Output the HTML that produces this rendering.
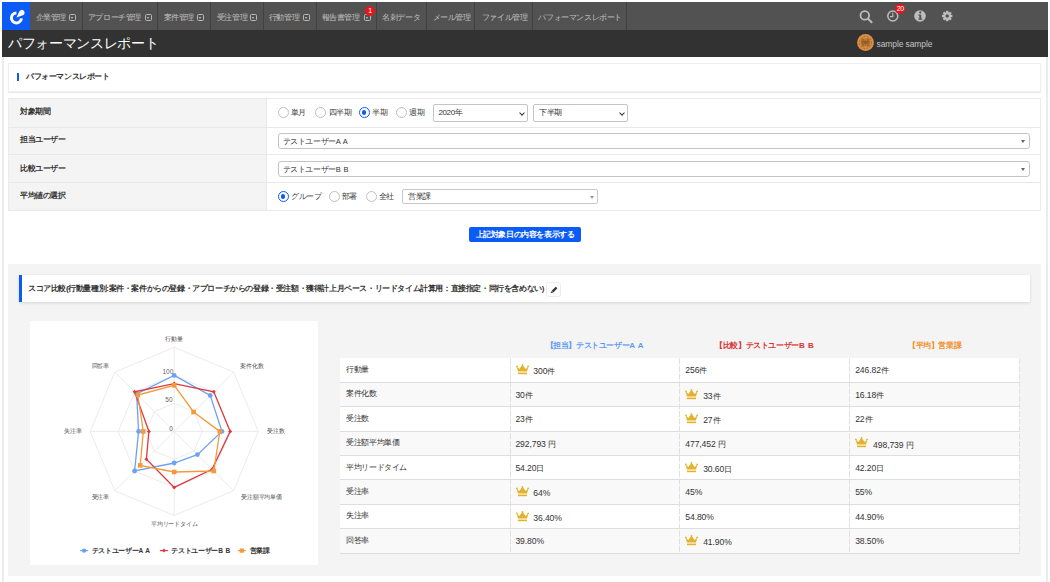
<!DOCTYPE html>
<html lang="ja"><head><meta charset="utf-8">
<style>
*{box-sizing:border-box;margin:0;padding:0}
html,body{width:1050px;height:582px;overflow:hidden;background:#fff;font-family:"Liberation Sans",sans-serif;color:#333}
.a{position:absolute}
#nav{left:2px;top:2px;width:1046px;height:28px;background:#525252}
#logo{left:0;top:0;width:28px;height:28px;background:#0b5cf6}
.ni{top:0;height:28px;border-right:1px solid #3d3d3d;color:#c4c4c4;font-size:7.5px;line-height:28px;padding-left:6px;white-space:nowrap}
.ic{top:12px;width:7px;height:7px;border:1.2px solid #b8b8b8;border-radius:1.5px}
.ic:after{content:"";position:absolute;left:1px;top:1.8px;width:0;height:0;border-left:1.6px solid transparent;border-right:1.6px solid transparent;border-top:2px solid #c8c8c8}
#hdr{left:2px;top:30px;width:1046px;height:27px;background:#323232}
#title{left:8px;top:30px;height:27px;line-height:27px;font-size:14px;letter-spacing:-0.35px;color:#fff;white-space:nowrap}
#wrap{left:2px;top:57px;width:1046px;height:525px;border-left:2px solid #ececec;border-right:2px solid #ececec;background:#fff}
#bc{left:8px;top:63px;width:1033px;height:29px;border:1px solid #efefef;background:#fff;box-shadow:0 1px 1px rgba(0,0,0,.08)}
#bcbar{left:17px;top:73px;width:2px;height:8px;background:#0b5cf6}
#bctext{left:26px;top:72px;font-size:8px;letter-spacing:-0.4px;line-height:10px;font-weight:bold;color:#333;white-space:nowrap}
#ft{left:8px;top:98px;width:1033px;height:112px;border:1px solid #ececec;background:#fff}
.fl{left:8px;width:259px;background:#f4f4f4;border-bottom:1px solid #e8e8e8;border-right:1px solid #e8e8e8;border-left:1px solid #ececec;font-size:8px;letter-spacing:-0.4px;font-weight:bold;padding-left:11px;white-space:nowrap}
.fr{left:267px;width:774px;border-bottom:1px solid #e8e8e8;border-right:1px solid #ececec}
.rad{display:inline-block;width:11px;height:11px;border:1px solid #c0c0c0;border-radius:50%;position:absolute}
.rad.on{border:1.4px solid #0b5cf6}
.rad.on:after{content:"";position:absolute;left:2.1px;top:2.1px;width:4.4px;height:4.4px;border-radius:50%;background:#0b5cf6}
.rt{position:absolute;font-size:8px;letter-spacing:-0.4px;white-space:nowrap;color:#444;margin-top:-0.8px}
.sel{position:absolute;border:1px solid #c4c4c4;border-radius:3px;background:#fff;font-size:8px;letter-spacing:-0.4px;white-space:nowrap;padding-left:8px}
#btn{left:469px;top:227px;width:112px;height:15px;background:#0b5cf6;border-radius:2px;color:#fff;font-size:8px;letter-spacing:-0.4px;font-weight:bold;line-height:15px;text-align:center;white-space:nowrap}
#sc{left:8px;top:264px;width:1033px;height:312px;background:#f4f4f4}
#sch{left:19px;top:275px;width:1011px;height:27px;background:#fff;border-left:3px solid #0b5cf6;box-shadow:0 1px 3px rgba(0,0,0,.13)}
#schtext{left:28px;top:284px;font-size:8px;letter-spacing:-0.4px;line-height:10px;font-weight:bold;color:#333;white-space:nowrap}
#edit{left:546px;top:282px;width:15px;height:15px;background:#fff;border:1px solid #ececec;border-radius:2.5px}
#chart{left:30px;top:321px;width:288px;height:244px;background:#fff}
#tbl{left:340px;top:358px;width:679px;border-collapse:collapse;font-size:7.5px;color:#333}
.tr{position:absolute;left:340px;width:680px;height:24.3px}
.td{position:absolute;top:0;height:100%;line-height:24px;white-space:nowrap;padding-left:6px}
.sep{top:0;width:1px;height:28px;background:#414141}
.nt{top:1.5px;height:28px;line-height:28px;font-size:8px;letter-spacing:-0.4px;color:#c2c2c2;white-space:nowrap}
.badge{background:#e8151b;color:#fff;border-radius:50%;text-align:center;font-size:7px;font-weight:normal}
.chev{position:absolute;top:5.5px;width:4px;height:4px;border-right:1.3px solid #333;border-bottom:1.3px solid #333;transform:rotate(45deg)}
.tri{position:absolute;right:4px;top:6px;width:0;height:0;border-left:2.5px solid transparent;border-right:2.5px solid transparent;border-top:3px solid #666}
.tl{font-size:8px;letter-spacing:-0.4px;line-height:10px;white-space:nowrap;color:#333}
.tv{font-size:8.6px;line-height:10px;white-space:nowrap;color:#333;letter-spacing:-0.1px}
.js{font-size:8px;letter-spacing:-0.4px}
.crown{display:block}
.th{font-size:8px;letter-spacing:-0.4px;font-weight:bold;line-height:10px;white-space:nowrap}
.cl{font-size:6px;letter-spacing:-0.2px;line-height:8px;color:#4a4a4a;white-space:nowrap}
.ct{font-size:6.5px;line-height:8px;color:#666;white-space:nowrap}
.lg{font-size:7px;letter-spacing:-0.3px;line-height:9px;color:#333;font-weight:bold;white-space:nowrap}
.aa{font-size:7.5px;letter-spacing:0.4px}
.aa2{letter-spacing:0.5px}
.aa3{letter-spacing:0.4px;font-size:6.5px}
</style></head><body>
<div id="nav" class="a">
<div id="logo" class="a"><svg width="28" height="28" viewBox="0 0 28 28"><path d="M14.4 10.9 A5 5 0 1 0 19.4 16.4" fill="none" stroke="#fff" stroke-width="3"/><path d="M14.4 15.4 L17.3 9.4 A2.8 2.8 0 1 1 21 13.2 Z" fill="#fff"/></svg></div>
<div class="a sep" style="left:80px"></div>
<div class="a sep" style="left:155px"></div>
<div class="a sep" style="left:208px"></div>
<div class="a sep" style="left:261px"></div>
<div class="a sep" style="left:314px"></div>
<div class="a sep" style="left:374px"></div>
<div class="a sep" style="left:424px"></div>
<div class="a sep" style="left:472px"></div>
<div class="a sep" style="left:530px"></div>
<div class="a sep" style="left:624px"></div>
<div class="a nt" style="left:33.5px">企業管理</div>
<div class="a ic" style="left:67.2px"></div>
<div class="a nt" style="left:85.9px">アプローチ管理</div>
<div class="a ic" style="left:143.0px"></div>
<div class="a nt" style="left:161.7px">案件管理</div>
<div class="a ic" style="left:195.4px"></div>
<div class="a nt" style="left:214.8px">受注管理</div>
<div class="a ic" style="left:248.3px"></div>
<div class="a nt" style="left:266.8px">行動管理</div>
<div class="a ic" style="left:301.1px"></div>
<div class="a nt" style="left:319.6px">報告書管理</div>
<div class="a ic" style="left:362.0px"></div>
<div class="a nt" style="left:380.3px">名刺データ</div>
<div class="a nt" style="left:430.5px">メール管理</div>
<div class="a nt" style="left:479.9px">ファイル管理</div>
<div class="a nt" style="left:536.4px">パフォーマンスレポート</div>
<div class="a badge" style="left:363.1px;top:3.5px;width:10px;height:10px;line-height:10px">1</div>
<svg class="a" style="left:0;top:0" width="1046" height="28">
<g transform="translate(-2,-2)">
<circle cx="864.8" cy="15.4" r="4.3" fill="none" stroke="#bdbdbd" stroke-width="1.8"/>
<line x1="867.9" y1="18.6" x2="871.6" y2="22.2" stroke="#bdbdbd" stroke-width="2" stroke-linecap="round"/>
<circle cx="892.8" cy="16" r="5" fill="none" stroke="#bdbdbd" stroke-width="1.5"/>
<path d="M892.8 12.8 V16.6 H890" fill="none" stroke="#bdbdbd" stroke-width="1.1"/>
<circle cx="920" cy="16" r="5.8" fill="#bdbdbd"/>
<rect x="919.3" y="14.8" width="2" height="4.6" fill="#525252"/>
<rect x="918.3" y="14.6" width="2" height="1" fill="#525252"/>
<rect x="918.3" y="18.6" width="4" height="1" fill="#525252"/>
<circle cx="920.3" cy="12.4" r="1.1" fill="#525252"/>
<g transform="translate(947.2,16) scale(0.9)" fill="#bdbdbd">
<circle r="4.3"/>
<g id="tooth"><rect x="-1.3" y="-5.8" width="2.6" height="3"/></g>
<use href="#tooth" transform="rotate(45)"/><use href="#tooth" transform="rotate(90)"/><use href="#tooth" transform="rotate(135)"/><use href="#tooth" transform="rotate(180)"/><use href="#tooth" transform="rotate(225)"/><use href="#tooth" transform="rotate(270)"/><use href="#tooth" transform="rotate(315)"/>
<circle r="1.9" fill="#525252"/>
</g>
</g></svg>
<div class="a badge" style="left:892.9px;top:1.5px;width:10.6px;height:10.6px;line-height:10.6px;font-size:7px;letter-spacing:-0.5px;font-weight:normal">20</div>
</div>
<div id="hdr" class="a"></div>
<div id="title" class="a">パフォーマンスレポート</div>
<div id="wrap" class="a"></div>
<div id="bc" class="a"></div>
<div id="bcbar" class="a"></div>
<div id="bctext" class="a">パフォーマンスレポート</div>

<svg class="a" style="left:857px;top:34.4px" width="17" height="17" viewBox="0 0 17 17"><circle cx="8.5" cy="8.5" r="8.4" fill="#dc8f42"/><circle cx="8.5" cy="8.5" r="6" fill="none" stroke="#9c6028" stroke-width="0.8" stroke-dasharray="2 1.2"/><rect x="3.8" y="4.6" width="9.4" height="7.8" rx="2" fill="#b8773a"/><path d="M4 8.2 Q8.5 6 13 8.2 M6 4.5 V12.5 M11 4.5 V12.5" stroke="#80501f" stroke-width="0.7" fill="none"/><circle cx="8.5" cy="8.8" r="1.5" fill="#8e5722"/></svg>
<div class="a" style="left:876.5px;top:38px;font-size:8.5px;line-height:12px;color:#c4c4c4;white-space:nowrap;letter-spacing:-0.1px">sample sample</div>

<div class="a fl" style="top:98px;height:30px;line-height:26.5px;border-top:1px solid #e8e8e8">対象期間</div>
<div class="a fl" style="top:128px;height:27px;line-height:24.7px">担当ユーザー</div>
<div class="a fl" style="top:155px;height:28px;line-height:28.3px">比較ユーザー</div>
<div class="a fl" style="top:183px;height:28px;line-height:25.5px">平均値の選択</div>
<div class="a fr" style="top:98px;height:30px;border-top:1px solid #e8e8e8"></div>
<div class="a fr" style="top:128px;height:27px"></div>
<div class="a fr" style="top:155px;height:28px"></div>
<div class="a fr" style="top:183px;height:28px"></div>

<div class="rad" style="left:278px;top:107.2px"></div><div class="rt" style="left:290.5px;top:108px">単月</div>
<div class="rad" style="left:315px;top:107.2px"></div><div class="rt" style="left:328.6px;top:108px">四半期</div>
<div class="rad on" style="left:359px;top:107.2px"></div><div class="rt" style="left:372.4px;top:108px">半期</div>
<div class="rad" style="left:396px;top:107.2px"></div><div class="rt" style="left:409.3px;top:108px">週期</div>
<div class="sel" style="left:433px;top:104px;width:95px;height:17.5px;line-height:16px;border-radius:2px;padding-left:4.5px">2020年<span class="chev" style="right:3px"></span></div>
<div class="sel" style="left:533px;top:104px;width:95px;height:17.5px;line-height:16px;border-radius:2px;padding-left:5px">下半期<span class="chev" style="right:3px"></span></div>

<div class="sel" style="left:278px;top:133px;width:751.5px;height:15.5px;line-height:15.8px;padding-left:3.5px">テストユーザー<span class="aa">A A</span><span class="tri"></span></div>
<div class="sel" style="left:278px;top:161px;width:751.5px;height:15.5px;line-height:15.8px;padding-left:3.5px">テストユーザー<span class="aa">B B</span><span class="tri"></span></div>

<div class="rad on" style="left:278px;top:191.2px"></div><div class="rt" style="left:291.2px;top:192px">グループ</div>
<div class="rad" style="left:328.6px;top:191.2px"></div><div class="rt" style="left:341.9px;top:192px">部署</div>
<div class="rad" style="left:366px;top:191.2px"></div><div class="rt" style="left:378.9px;top:192px">全社</div>
<div class="sel" style="left:402px;top:188.8px;width:196px;height:15px;line-height:13.5px;border-radius:2px;border-color:#c8c8c8;padding-left:5px">営業課<span class="tri" style="right:3.5px;border-top-color:#999"></span></div>
<div id="btn" class="a">上記対象日の内容を表示する</div>
<div id="sc" class="a"></div>
<div id="sch" class="a"></div>
<div id="schtext" class="a">スコア比較(行動量種別:案件・案件からの登録・アプローチからの登録・受注額・獲得計上月ペース・リードタイム計算用：直接指定・同行を含めない)</div>
<div id="edit" class="a"></div><svg class="a" style="left:546px;top:282px" width="16" height="16" viewBox="0 0 16 16"><g transform="rotate(45 8 8)"><rect x="6.9" y="4.4" width="2.3" height="5.8" fill="#333"/><path d="M6.9 10.5 H9.2 L8.05 12.5 Z" fill="#333"/></g></svg>
<div id="chart" class="a"></div>
<!--TBL-->
<div class="a" style="left:340.0px;top:358.4px;width:679.6px;height:195.2px;background:#fff"></div>
<div class="a" style="left:340.0px;top:358.40px;width:679.6px;height:24.40px;background:#fff;border-bottom:1px solid #dedede"></div>
<div class="a tl" style="left:346.2px;top:365.00px">行動量</div>
<div class="a" style="left:515.5px;top:364.10px;width:13px;height:11px"><svg class="crown" width="13" height="11" viewBox="0 0 13 11"><path d="M0.6 2.6 L3.3 5 L6.5 0.8 L9.7 5 L12.4 2.6 L11 7.6 H2 Z" fill="#e3b22a"/><circle cx="0.9" cy="2.4" r="0.9" fill="#e3b22a"/><circle cx="12.1" cy="2.4" r="0.9" fill="#e3b22a"/><circle cx="6.5" cy="0.9" r="0.9" fill="#e3b22a"/><rect x="2" y="8.6" width="9" height="1.6" fill="#e3b22a"/></svg></div>
<div class="a tv" style="left:533.3px;top:366.40px">300<span class="js">件</span></div>
<div class="a tv" style="left:685.3px;top:365.40px">256<span class="js">件</span></div>
<div class="a tv" style="left:855.2px;top:365.40px">246.82<span class="js">件</span></div>
<div class="a" style="left:340.0px;top:382.80px;width:679.6px;height:24.40px;background:#f9f9f9;border-bottom:1px solid #dedede"></div>
<div class="a tl" style="left:346.2px;top:389.40px">案件化数</div>
<div class="a tv" style="left:515.4px;top:389.80px">30<span class="js">件</span></div>
<div class="a" style="left:685.4px;top:388.50px;width:13px;height:11px"><svg class="crown" width="13" height="11" viewBox="0 0 13 11"><path d="M0.6 2.6 L3.3 5 L6.5 0.8 L9.7 5 L12.4 2.6 L11 7.6 H2 Z" fill="#e3b22a"/><circle cx="0.9" cy="2.4" r="0.9" fill="#e3b22a"/><circle cx="12.1" cy="2.4" r="0.9" fill="#e3b22a"/><circle cx="6.5" cy="0.9" r="0.9" fill="#e3b22a"/><rect x="2" y="8.6" width="9" height="1.6" fill="#e3b22a"/></svg></div>
<div class="a tv" style="left:703.2px;top:390.80px">33<span class="js">件</span></div>
<div class="a tv" style="left:855.2px;top:389.80px">16.18<span class="js">件</span></div>
<div class="a" style="left:340.0px;top:407.20px;width:679.6px;height:24.40px;background:#fff;border-bottom:1px solid #dedede"></div>
<div class="a tl" style="left:346.2px;top:413.80px">受注数</div>
<div class="a tv" style="left:515.4px;top:414.20px">23<span class="js">件</span></div>
<div class="a" style="left:685.4px;top:412.90px;width:13px;height:11px"><svg class="crown" width="13" height="11" viewBox="0 0 13 11"><path d="M0.6 2.6 L3.3 5 L6.5 0.8 L9.7 5 L12.4 2.6 L11 7.6 H2 Z" fill="#e3b22a"/><circle cx="0.9" cy="2.4" r="0.9" fill="#e3b22a"/><circle cx="12.1" cy="2.4" r="0.9" fill="#e3b22a"/><circle cx="6.5" cy="0.9" r="0.9" fill="#e3b22a"/><rect x="2" y="8.6" width="9" height="1.6" fill="#e3b22a"/></svg></div>
<div class="a tv" style="left:703.2px;top:415.20px">27<span class="js">件</span></div>
<div class="a tv" style="left:855.2px;top:414.20px">22<span class="js">件</span></div>
<div class="a" style="left:340.0px;top:431.60px;width:679.6px;height:24.40px;background:#f9f9f9;border-bottom:1px solid #dedede"></div>
<div class="a tl" style="left:346.2px;top:438.20px">受注額平均単価</div>
<div class="a tv" style="left:515.4px;top:438.60px">292,793 <span class="js">円</span></div>
<div class="a tv" style="left:685.3px;top:438.60px">477,452 <span class="js">円</span></div>
<div class="a" style="left:855.3px;top:437.30px;width:13px;height:11px"><svg class="crown" width="13" height="11" viewBox="0 0 13 11"><path d="M0.6 2.6 L3.3 5 L6.5 0.8 L9.7 5 L12.4 2.6 L11 7.6 H2 Z" fill="#e3b22a"/><circle cx="0.9" cy="2.4" r="0.9" fill="#e3b22a"/><circle cx="12.1" cy="2.4" r="0.9" fill="#e3b22a"/><circle cx="6.5" cy="0.9" r="0.9" fill="#e3b22a"/><rect x="2" y="8.6" width="9" height="1.6" fill="#e3b22a"/></svg></div>
<div class="a tv" style="left:873.1px;top:439.60px">498,739 <span class="js">円</span></div>
<div class="a" style="left:340.0px;top:456.00px;width:679.6px;height:24.40px;background:#fff;border-bottom:1px solid #dedede"></div>
<div class="a tl" style="left:346.2px;top:462.60px">平均リードタイム</div>
<div class="a tv" style="left:515.4px;top:463.00px">54.20<span class="js">日</span></div>
<div class="a" style="left:685.4px;top:461.70px;width:13px;height:11px"><svg class="crown" width="13" height="11" viewBox="0 0 13 11"><path d="M0.6 2.6 L3.3 5 L6.5 0.8 L9.7 5 L12.4 2.6 L11 7.6 H2 Z" fill="#e3b22a"/><circle cx="0.9" cy="2.4" r="0.9" fill="#e3b22a"/><circle cx="12.1" cy="2.4" r="0.9" fill="#e3b22a"/><circle cx="6.5" cy="0.9" r="0.9" fill="#e3b22a"/><rect x="2" y="8.6" width="9" height="1.6" fill="#e3b22a"/></svg></div>
<div class="a tv" style="left:703.2px;top:464.00px">30.60<span class="js">日</span></div>
<div class="a tv" style="left:855.2px;top:463.00px">42.20<span class="js">日</span></div>
<div class="a" style="left:340.0px;top:480.40px;width:679.6px;height:24.40px;background:#f9f9f9;border-bottom:1px solid #dedede"></div>
<div class="a tl" style="left:346.2px;top:487.00px">受注率</div>
<div class="a" style="left:515.5px;top:486.10px;width:13px;height:11px"><svg class="crown" width="13" height="11" viewBox="0 0 13 11"><path d="M0.6 2.6 L3.3 5 L6.5 0.8 L9.7 5 L12.4 2.6 L11 7.6 H2 Z" fill="#e3b22a"/><circle cx="0.9" cy="2.4" r="0.9" fill="#e3b22a"/><circle cx="12.1" cy="2.4" r="0.9" fill="#e3b22a"/><circle cx="6.5" cy="0.9" r="0.9" fill="#e3b22a"/><rect x="2" y="8.6" width="9" height="1.6" fill="#e3b22a"/></svg></div>
<div class="a tv" style="left:533.3px;top:488.40px">64%</div>
<div class="a tv" style="left:685.3px;top:487.40px">45%</div>
<div class="a tv" style="left:855.2px;top:487.40px">55%</div>
<div class="a" style="left:340.0px;top:504.80px;width:679.6px;height:24.40px;background:#fff;border-bottom:1px solid #dedede"></div>
<div class="a tl" style="left:346.2px;top:511.40px">失注率</div>
<div class="a" style="left:515.5px;top:510.50px;width:13px;height:11px"><svg class="crown" width="13" height="11" viewBox="0 0 13 11"><path d="M0.6 2.6 L3.3 5 L6.5 0.8 L9.7 5 L12.4 2.6 L11 7.6 H2 Z" fill="#e3b22a"/><circle cx="0.9" cy="2.4" r="0.9" fill="#e3b22a"/><circle cx="12.1" cy="2.4" r="0.9" fill="#e3b22a"/><circle cx="6.5" cy="0.9" r="0.9" fill="#e3b22a"/><rect x="2" y="8.6" width="9" height="1.6" fill="#e3b22a"/></svg></div>
<div class="a tv" style="left:533.3px;top:512.80px">36.40%</div>
<div class="a tv" style="left:685.3px;top:511.80px">54.80%</div>
<div class="a tv" style="left:855.2px;top:511.80px">44.90%</div>
<div class="a" style="left:340.0px;top:529.20px;width:679.6px;height:24.40px;background:#f9f9f9;border-bottom:1px solid #dedede"></div>
<div class="a tl" style="left:346.2px;top:535.80px">回答率</div>
<div class="a tv" style="left:515.4px;top:536.20px">39.80%</div>
<div class="a" style="left:685.4px;top:534.90px;width:13px;height:11px"><svg class="crown" width="13" height="11" viewBox="0 0 13 11"><path d="M0.6 2.6 L3.3 5 L6.5 0.8 L9.7 5 L12.4 2.6 L11 7.6 H2 Z" fill="#e3b22a"/><circle cx="0.9" cy="2.4" r="0.9" fill="#e3b22a"/><circle cx="12.1" cy="2.4" r="0.9" fill="#e3b22a"/><circle cx="6.5" cy="0.9" r="0.9" fill="#e3b22a"/><rect x="2" y="8.6" width="9" height="1.6" fill="#e3b22a"/></svg></div>
<div class="a tv" style="left:703.2px;top:537.20px">41.90%</div>
<div class="a tv" style="left:855.2px;top:536.20px">38.50%</div>
<svg class="a" style="left:0;top:0" width="1050" height="582">
<line x1="510.5" y1="358.4" x2="510.5" y2="553.6" stroke="#e0e0e0" stroke-width="1" stroke-dasharray="6 1.5"/>
<line x1="679.5" y1="358.4" x2="679.5" y2="553.6" stroke="#e0e0e0" stroke-width="1" stroke-dasharray="6 1.5"/>
<line x1="849.5" y1="358.4" x2="849.5" y2="553.6" stroke="#e0e0e0" stroke-width="1" stroke-dasharray="6 1.5"/>
<line x1="1019.5" y1="358.4" x2="1019.5" y2="553.6" stroke="#e0e0e0" stroke-width="1" stroke-dasharray="6 1.5"/>
</svg>
<div class="a th" style="left:509.9px;width:169.9px;top:340.7px;color:#5e9cf2;text-align:center">【担当】テストユーザー<span class="aa2">A A</span></div>
<div class="a th" style="left:679.8px;width:169.9px;top:340.7px;color:#d93434;text-align:center">【比較】テストユーザー<span class="aa2">B B</span></div>
<div class="a th" style="left:849.7px;width:169.9px;top:340.7px;color:#f0922e;text-align:center">【平均】営業課</div>
<!--/TBL-->
<svg class="a" style="left:0;top:0" width="1050" height="582">
<polygon points="174.2,403.4 194.0,411.6 202.2,431.4 194.0,451.2 174.2,459.4 154.4,451.2 146.2,431.4 154.4,411.6" fill="none" stroke="#e6e6e6" stroke-width="0.8"/>
<polygon points="174.2,375.4 213.8,391.8 230.2,431.4 213.8,471.0 174.2,487.4 134.6,471.0 118.2,431.4 134.6,391.8" fill="none" stroke="#e6e6e6" stroke-width="0.8"/>
<polygon points="174.2,347.4 233.6,372.0 258.2,431.4 233.6,490.8 174.2,515.4 114.8,490.8 90.2,431.4 114.8,372.0" fill="none" stroke="#e6e6e6" stroke-width="0.8"/>
<line x1="174.2" y1="431.4" x2="174.2" y2="347.4" stroke="#e6e6e6" stroke-width="0.8"/>
<line x1="174.2" y1="431.4" x2="233.6" y2="372.0" stroke="#e6e6e6" stroke-width="0.8"/>
<line x1="174.2" y1="431.4" x2="258.2" y2="431.4" stroke="#e6e6e6" stroke-width="0.8"/>
<line x1="174.2" y1="431.4" x2="233.6" y2="490.8" stroke="#e6e6e6" stroke-width="0.8"/>
<line x1="174.2" y1="431.4" x2="174.2" y2="515.4" stroke="#e6e6e6" stroke-width="0.8"/>
<line x1="174.2" y1="431.4" x2="114.8" y2="490.8" stroke="#e6e6e6" stroke-width="0.8"/>
<line x1="174.2" y1="431.4" x2="90.2" y2="431.4" stroke="#e6e6e6" stroke-width="0.8"/>
<line x1="174.2" y1="431.4" x2="114.8" y2="372.0" stroke="#e6e6e6" stroke-width="0.8"/>
<polygon points="174.2,375.4 210.2,395.4 221.9,431.4 197.4,454.6 174.2,463.0 134.6,471.0 138.6,431.4 136.6,393.8" fill="none" stroke="#6ea1f3" stroke-width="1.3"/><circle cx="174.2" cy="375.4" r="2.4" fill="#6ea1f3"/><circle cx="210.2" cy="395.4" r="2.4" fill="#6ea1f3"/><circle cx="221.9" cy="431.4" r="2.4" fill="#6ea1f3"/><circle cx="197.4" cy="454.6" r="2.4" fill="#6ea1f3"/><circle cx="174.2" cy="463.0" r="2.4" fill="#6ea1f3"/><circle cx="134.6" cy="471.0" r="2.4" fill="#6ea1f3"/><circle cx="138.6" cy="431.4" r="2.4" fill="#6ea1f3"/><circle cx="136.6" cy="393.8" r="2.4" fill="#6ea1f3"/>
<polygon points="174.2,383.6 213.8,391.8 230.2,431.4 212.1,469.3 174.2,487.4 146.4,459.2 148.9,431.4 134.6,391.8" fill="none" stroke="#dc3a3f" stroke-width="1.3"/><rect x="172.8" y="382.2" width="2.8" height="2.8" fill="#dc3a3f" transform="rotate(45 174.2 383.6)"/><rect x="212.4" y="390.4" width="2.8" height="2.8" fill="#dc3a3f" transform="rotate(45 213.8 391.8)"/><rect x="228.8" y="430.0" width="2.8" height="2.8" fill="#dc3a3f" transform="rotate(45 230.2 431.4)"/><rect x="210.7" y="467.9" width="2.8" height="2.8" fill="#dc3a3f" transform="rotate(45 212.1 469.3)"/><rect x="172.8" y="486.0" width="2.8" height="2.8" fill="#dc3a3f" transform="rotate(45 174.2 487.4)"/><rect x="145.0" y="457.8" width="2.8" height="2.8" fill="#dc3a3f" transform="rotate(45 146.4 459.2)"/><rect x="147.5" y="430.0" width="2.8" height="2.8" fill="#dc3a3f" transform="rotate(45 148.9 431.4)"/><rect x="133.2" y="390.4" width="2.8" height="2.8" fill="#dc3a3f" transform="rotate(45 134.6 391.8)"/>
<polygon points="174.2,385.3 193.6,412.0 219.8,431.4 213.8,471.0 174.2,472.0 140.2,465.4 143.3,431.4 137.8,395.0" fill="none" stroke="#f29a3c" stroke-width="1.3"/><rect x="171.9" y="383.0" width="4.6" height="4.6" fill="#f29a3c"/><rect x="191.3" y="409.7" width="4.6" height="4.6" fill="#f29a3c"/><rect x="217.5" y="429.1" width="4.6" height="4.6" fill="#f29a3c"/><rect x="211.5" y="468.7" width="4.6" height="4.6" fill="#f29a3c"/><rect x="171.9" y="469.7" width="4.6" height="4.6" fill="#f29a3c"/><rect x="137.9" y="463.1" width="4.6" height="4.6" fill="#f29a3c"/><rect x="141.0" y="429.1" width="4.6" height="4.6" fill="#f29a3c"/><rect x="135.5" y="392.7" width="4.6" height="4.6" fill="#f29a3c"/>

</svg>
<div class="a cl" style="left:174.1px;top:334.9px;width:80px;margin-left:-40px;text-align:center">行動量</div>
<div class="a cl" style="left:251.8px;top:362.1px;width:80px;margin-left:-40px;text-align:center">案件化数</div>
<div class="a cl" style="left:275.7px;top:427.0px;width:80px;margin-left:-40px;text-align:center">受注数</div>
<div class="a cl" style="left:261.5px;top:492.6px;width:80px;margin-left:-40px;text-align:center">受注額平均単価</div>
<div class="a cl" style="left:174.2px;top:519.6px;width:80px;margin-left:-40px;text-align:center">平均リードタイム</div>
<div class="a cl" style="left:100.4px;top:492.6px;width:80px;margin-left:-40px;text-align:center">受注率</div>
<div class="a cl" style="left:73.1px;top:427.0px;width:80px;margin-left:-40px;text-align:center">失注率</div>
<div class="a cl" style="left:100.3px;top:362.1px;width:80px;margin-left:-40px;text-align:center">回答率</div>
<div class="a ct" style="left:171.1px;top:424.5px;width:30px;margin-left:-15px;text-align:center">0</div>
<div class="a ct" style="left:168.9px;top:396.0px;width:30px;margin-left:-15px;text-align:center">50</div>
<div class="a ct" style="left:167.9px;top:367.6px;width:30px;margin-left:-15px;text-align:center">100</div>
<div class="a lg" style="left:91.5px;top:546px">テストユーザー<span class="aa3">A A</span></div>
<div class="a lg" style="left:171.3px;top:546px">テストユーザー<span class="aa3">B B</span></div>
<div class="a lg" style="left:249.7px;top:546px">営業課</div>
<svg class="a" style="left:0;top:0" width="1050" height="582">
<line x1="80.1" y1="550.6" x2="88.1" y2="550.6" stroke="#6ea1f3" stroke-width="1.2"/>
<circle cx="84.1" cy="550.6" r="2.2" fill="#6ea1f3"/>
<line x1="159.9" y1="550.6" x2="167.9" y2="550.6" stroke="#dc3a3f" stroke-width="1.2"/>
<rect x="162.5" y="549.2" width="2.8" height="2.8" fill="#dc3a3f" transform="rotate(45 163.9 550.6)"/>
<line x1="237.8" y1="550.6" x2="245.8" y2="550.6" stroke="#f29a3c" stroke-width="1.2"/>
<rect x="239.7" y="548.5" width="4.2" height="4.2" fill="#f29a3c"/>
</svg>
</body></html>
